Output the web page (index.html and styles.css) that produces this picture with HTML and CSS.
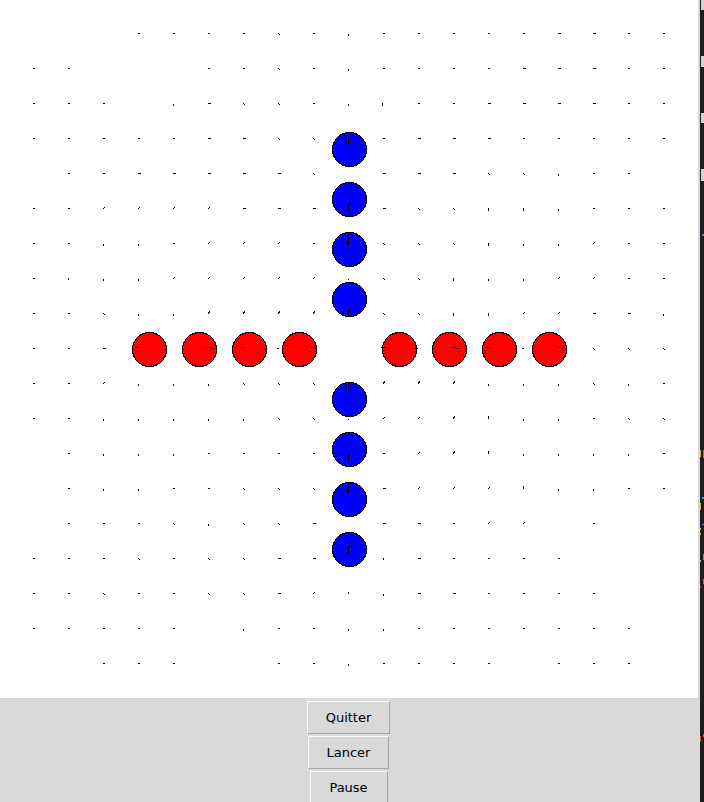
FILE: index.html
```html
<!DOCTYPE html>
<html lang="fr">
<head>
<meta charset="utf-8">
<title>Simulation</title>
<link rel="stylesheet" href="styles.css">
</head>
<body>
<div class="app">
  <svg class="canvas" width="698" height="698" viewBox="0 0 698 698" shape-rendering="crispEdges">
    <path class="field" d="
M138 33.5h2M173 33.5h2M208 33.5h2M243 33.5h2M278 33.5l2 1M313 33.5h2M348 33.5v2M383 33.5h2M418 33.5h2M453 33.5h2M488 33.5h2M523 33.5h2M558 33.5h3M593 33.5h3M628 33.5h2M663 33.5h2
M33 68.5h2M68 68.5h2M208 68.5h2M243 68.5h2M278 68.5l2 1M313 68.5h2M348 68.5v2M383 68.5h2M418 68.5h2M453 68.5h2M488 68.5h2M523 68.5h3M558 68.5h3M593 68.5h3M628 68.5h2M663 68.5h2
M33 103.5h2M68 103.5h2M103 103.5h2M173 103.5v2M208 103.5h3M243 103.5l2 1M278 103.5l2 1M313 103.5h2M348 103.5v2M383 103.5l-1 2M418 103.5h2M453 103.5h2M488 103.5h3M523 103.5h3M558 103.5h3M593 103.5h3M628 103.5h2M663 103.5h2
M33 138.5h2M68 138.5h2M103 138.5h2M138 138.5h2M173 138.5h2M208 138.5h3M243 138.5h3M278 138.5l2 1M313 138.5l2 1M383 138.5h2M418 138.5h3M453 138.5h3M488 138.5h3M523 138.5h2M558 138.5h2M593 138.5h2M628 138.5h2M663 138.5h2
M68 173.5h2M103 173.5h2M138 173.5h3M173 173.5h3M208 173.5h3M243 173.5h3M278 173.5h3M313 173.5l2 1M383 173.5h3M418 173.5h3M453 173.5h3M488 173.5l2 1M523 173.5l2 1M558 173.5v2M593 173.5h2M628 173.5h2
M33 208.5h2M68 208.5h2M103 208.5l2 -1M138 208.5l2 -1M173 208.5l2 -1M208 208.5l2 -1M243 208.5h3M278 208.5h3M313 208.5h3M383 208.5h3M418 208.5l2 1M453 208.5l2 1M488 208.5l1 2M523 208.5l1 2M558 208.5v2M593 208.5h2M628 208.5h2M663 208.5h2
M33 243.5h2M68 243.5h2M103 243.5v2M138 243.5v2M173 243.5h2M208 243.5l2 -1M243 243.5l2 -1M278 243.5l2 -1M313 243.5h2M383 243.5l2 1M418 243.5l2 1M453 243.5l2 1M488 243.5l1 2M523 243.5v2M558 243.5v2M593 243.5l2 -1M628 243.5h2M663 243.5h2
M33 278.5h2M68 278.5l1 1M103 278.5v2M138 278.5v2M173 278.5l2 -1M208 278.5l2 -1M243 278.5l2 -1M278 278.5l2 -1M313 278.5l2 -1M348 278.5v1M383 278.5l2 1M418 278.5l2 1M453 278.5l1 2M488 278.5v2M523 278.5v2M558 278.5l2 -1M593 278.5l2 -1M628 278.5h2M663 278.5h2
M33 313.5h2M68 313.5h2M103 313.5l2 1M138 313.5v2M173 313.5v2M208 313.5l2 -2M243 313.5l2 -2M278 313.5l2 -2M313 313.5l2 -2M383 313.5l2 1M418 313.5l2 1M453 313.5l1 2M488 313.5l1 2M523 313.5l2 -1M558 313.5l2 -1M593 313.5h3M628 313.5h3M663 313.5v2
M33 348.5h2M68 348.5h2M103 348.5h3M277 348.5h2M522 348.5h2M593 348.5l2 1M628 348.5l2 1M663 348.5l2 1
M33 383.5h2M68 383.5h2M103 383.5l2 -1M138 383.5v2M173 383.5v2M208 383.5v2M243 383.5l2 1M278 383.5l2 1M313 383.5l2 1M383 383.5l2 -2M418 383.5l2 -2M453 383.5l2 -2M488 383.5v2M523 383.5v2M558 383.5v2M593 383.5l2 1M628 383.5v2M663 383.5h2
M33 418.5h2M68 418.5h2M103 418.5v2M138 418.5v2M173 418.5v2M208 418.5v2M243 418.5v2M278 418.5l2 1M313 418.5l2 1M348 418.5v1M383 418.5l2 -1M418 418.5l2 -1M453 418.5l2 -2M488 418.5l1 -2M523 418.5v2M558 418.5v2M593 418.5h2M628 418.5l2 1M663 418.5l2 1
M68 453.5h2M103 453.5v2M138 453.5v2M173 453.5v2M208 453.5h2M243 453.5h2M278 453.5h2M313 453.5h2M383 453.5h2M418 453.5l2 -1M453 453.5l2 -2M488 453.5l1 -2M523 453.5v2M558 453.5v2M593 453.5v2M628 453.5v2M663 453.5h2
M68 488.5h2M103 488.5v2M138 488.5v2M173 488.5h2M208 488.5h2M243 488.5l2 1M278 488.5l2 1M313 488.5l2 1M383 488.5h3M418 488.5l2 -1M453 488.5l2 -1M488 488.5l2 -1M523 488.5l1 -2M558 488.5v2M593 488.5v2M628 488.5h2M663 488.5h2
M68 523.5h2M103 523.5h2M138 523.5h2M173 523.5l2 1M208 523.5v2M243 523.5l2 1M278 523.5l2 1M313 523.5h3M383 523.5h3M418 523.5h3M453 523.5h2M488 523.5l2 -1M523 523.5l2 -1M593 523.5h2
M33 558.5h2M68 558.5h2M103 558.5h2M138 558.5l2 1M173 558.5h2M208 558.5l2 1M243 558.5l2 1M278 558.5h3M313 558.5h3M383 558.5l1 1M418 558.5h3M453 558.5h2M488 558.5h2M523 558.5h2M558 558.5h2
M33 593.5h2M68 593.5h2M103 593.5l2 1M138 593.5h2M173 593.5h2M208 593.5l2 1M243 593.5l2 1M278 593.5h3M313 593.5l2 -1M348 593.5l1 -1M383 593.5v2M418 593.5h3M453 593.5h3M488 593.5h2M523 593.5h2M558 593.5h2M593 593.5h2
M33 628.5h2M68 628.5h2M103 628.5h2M138 628.5h2M173 628.5h2M243 628.5v2M278 628.5h2M313 628.5h2M348 628.5v2M383 628.5v2M418 628.5h2M453 628.5h2M488 628.5h2M523 628.5h2M558 628.5h2M593 628.5h2M628 628.5h2
M103 663.5h2M138 663.5h2M173 663.5h2M278 663.5h2M313 663.5h2M348 663.5v2M383 663.5h2M418 663.5h2M453 663.5h2M488 663.5h2M558 663.5h2M593 663.5h2M628 663.5h2
"/>
    <g class="blue">
      <circle cx="349.5" cy="149.5" r="17"/>
      <circle cx="349.5" cy="199.5" r="17"/>
      <circle cx="349.5" cy="249.5" r="17"/>
      <circle cx="349.5" cy="299.5" r="17"/>
      <circle cx="349.5" cy="399.5" r="17"/>
      <circle cx="349.5" cy="449.5" r="17"/>
      <circle cx="349.5" cy="499.5" r="17"/>
      <circle cx="349.5" cy="549.5" r="17"/>
    </g>
    <g class="red">
      <circle cx="149.5" cy="349.5" r="17"/>
      <circle cx="199.5" cy="349.5" r="17"/>
      <circle cx="249.5" cy="349.5" r="17"/>
      <circle cx="299.5" cy="349.5" r="17"/>
      <circle cx="399.5" cy="349.5" r="17"/>
      <circle cx="449.5" cy="349.5" r="17"/>
      <circle cx="499.5" cy="349.5" r="17"/>
      <circle cx="549.5" cy="349.5" r="17"/>
    </g>
    <path class="vec" d="
M348.5 136v9M346 142l2.5 2.5
M348.5 203v8M348.5 203.5h2
M348.5 234v11M346 242l2.5 2.5
M348.5 310v6M348.5 310.5h2
M348.5 383v9M346 389l2.5 2.5
M348.5 453v8M348.5 453.5h2
M348.5 483v10M346 490l2.5 2.5
M348.5 546v8M348.5 546.5h2
M135 347.5h5
M206 347.5h5M211 348.5h3
M239 347.5h6
M311 347.5h6
M381 347.5h5M415 348.5h3
M451 347.5h5M456 348.5h3
M485 347.5h6
M556 347.5h5M561 348.5h3
"/>
  </svg>
  <div class="panel">
    <button class="btn btn-quit" type="button">Quitter</button>
    <button class="btn btn-start" type="button">Lancer</button>
    <button class="btn btn-pause" type="button">Pause</button>
  </div>
</div>
<svg class="strip" width="4" height="802" viewBox="0 0 4 802" shape-rendering="crispEdges">
  <rect class="s-light" x="1" y="0" width="3" height="10"/>
  <rect class="s-light" x="1" y="56" width="3" height="11"/>
  <rect class="s-light" x="1" y="113" width="3" height="10"/>
  <rect class="s-light" x="1" y="169" width="3" height="12"/>
  <rect class="s-blue" x="2" y="234" width="2" height="2"/>
  <rect class="s-orange" x="0" y="450" width="1" height="7"/>
  <rect class="s-blue" x="3" y="450" width="1" height="8"/>
  <rect class="s-blue" x="2" y="497" width="2" height="2"/>
  <rect class="s-orange" x="0" y="503" width="1" height="7"/>
  <rect class="s-blue" x="2" y="524" width="2" height="1"/>
  <rect class="s-orange" x="0" y="528" width="1" height="2"/>
  <rect class="s-orange" x="0" y="533" width="1" height="2"/>
  <rect class="s-blue" x="3" y="554" width="1" height="6"/>
  <rect class="s-orange" x="0" y="560" width="1" height="2"/>
  <rect class="s-blue" x="3" y="579" width="1" height="5"/>
  <rect class="s-red" x="0" y="586" width="1" height="2"/>
  <rect class="s-blue" x="3" y="734" width="1" height="3"/>
  <rect class="s-red" x="0" y="736" width="1" height="6"/>
</svg>
</body>
</html>
```

FILE: styles.css
```css
html, body {
  margin: 0;
  padding: 0;
}

body {
  width: 704px;
  height: 802px;
  overflow: hidden;
  display: flex;
  background: #1e1e1e;
}

.app {
  width: 700px;
  height: 802px;
  display: flex;
  flex-direction: column;
  background: #d9d9d9;
}

.canvas {
  display: block;
  width: 698px;
  height: 698px;
  background: #ffffff;
  flex: none;
}

.field {
  fill: none;
  stroke: #000;
  stroke-width: 1;
}

.blue circle {
  fill: #0000ff;
  stroke: #000;
  stroke-width: 1;
}

.red circle {
  fill: #ff0000;
  stroke: #000;
  stroke-width: 1;
}

.vec {
  fill: none;
  stroke: #000;
  stroke-width: 1;
}

.panel {
  width: 697px;
  flex: 1;
  display: flex;
  flex-direction: column;
  align-items: center;
  gap: 2px;
  padding-top: 3px;
  box-sizing: border-box;
}

.btn {
  box-sizing: border-box;
  height: 33px;
  padding: 0;
  margin: 0;
  flex: none;
  font-family: "DejaVu Sans", "Liberation Sans", sans-serif;
  font-size: 13px;
  color: #000;
  background: #d9d9d9;
  border: 1px solid;
  border-color: #fafafa #a6a6a6 #a6a6a6 #fafafa;
  border-radius: 0;
  outline: none;
}

.btn-quit {
  width: 83px;
}

.btn-start {
  width: 81px;
}

.btn-pause {
  width: 78px;
}

.strip {
  display: block;
  width: 4px;
  height: 802px;
  flex: none;
  background: #1e1e1e;
}

.s-light { fill: #c9d6e4; }
.s-blue { fill: #3b8ee8; }
.s-orange { fill: #d9a04a; }
.s-red { fill: #e0443a; }
```
